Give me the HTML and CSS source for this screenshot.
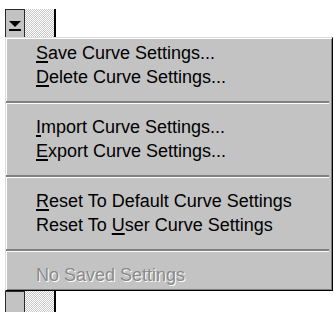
FILE: index.html
```html
<!DOCTYPE html>
<html>
<head>
<meta charset="utf-8">
<link rel="stylesheet" href="styles.css">
</head>
<body>
<div class="strip strip-top">
  <div class="btn">
    <svg class="arrow" width="14" height="12" viewBox="0 0 14 12">
      <polygon points="1,1 13,1 7,7" fill="#000"/>
      <rect x="1" y="9" width="12" height="2" fill="#000"/>
    </svg>
  </div>
  <div class="track"></div>
  <div class="rule"></div>
</div>
<div class="menu">
  <div class="item"><u>S</u>ave Curve Settings...</div>
  <div class="item"><u>D</u>elete Curve Settings...</div>
  <div class="sep"></div>
  <div class="item"><u>I</u>mport Curve Settings...</div>
  <div class="item"><u>E</u>xport Curve Settings...</div>
  <div class="sep"></div>
  <div class="item"><u>R</u>eset To Default Curve Settings</div>
  <div class="item">Reset To <u>U</u>ser Curve Settings</div>
  <div class="sep"></div>
  <div class="item disabled">No Saved Settings</div>
</div>
<div class="strip strip-bottom">
  <div class="btn"></div>
  <div class="track"></div>
  <div class="rule"></div>
</div>
</body>
</html>
```
FILE: styles.css
```css
html, body {
  margin: 0;
  padding: 0;
  background: #fff;
}
body {
  width: 334px;
  height: 312px;
  overflow: hidden;
  font-family: "Liberation Sans", Arial, sans-serif;
}
.strip {
  display: flex;
  padding-left: 5px;
}
.strip-top {
  margin-top: 9px;
  height: 28px;
}
.strip-bottom {
  height: 21px;
}
.btn {
  width: 20px;
  box-sizing: border-box;
  background: #c3c3c3;
  border-left: 1px solid #2a2a2a;
  border-right: 1px solid #2a2a2a;
  display: flex;
  justify-content: center;
  padding-top: 10px;
}
.strip-top .btn {
  border-top: 1px solid #2a2a2a;
}
.strip-bottom .btn {
  border-top: 1px solid #2a2a2a;
}
.track {
  width: 29px;
  background: repeating-conic-gradient(#c8c8c8 0 25%, #fff 0 50%) 0 0 / 2px 2px;
}
.rule {
  width: 2px;
  background: #000;
}
.menu {
  margin-left: 5px;
  width: 328px;
  height: 254px;
  box-sizing: border-box;
  background: #c3c3c3;
  border-top: 1px solid #dcdcdc;
  border-left: 1px solid #dcdcdc;
  border-right: 1px solid #000;
  border-bottom: 1px solid #000;
  box-shadow: inset 1px 1px 0 #fff, inset -1px -1px 0 #808080;
  padding: 3px 0 3px 0;
}
.item {
  height: 24px;
  line-height: 24px;
  padding-left: 30px;
  font-size: 18px;
  color: #000;
  white-space: nowrap;
}
.item u {
  text-decoration-thickness: 2px;
  text-underline-offset: 2px;
}
.sep {
  height: 26px;
  margin: 0 3px 0 0;
  display: flex;
  flex-direction: column;
  justify-content: center;
}
.sep::before {
  content: "";
  display: block;
  height: 2px;
  background: #808080;
}
.sep::after {
  content: "";
  display: block;
  height: 1px;
  background: #fff;
}
.disabled {
  color: #8a8a8a;
  text-shadow: 1px 1px 0 #fff;
}
```
